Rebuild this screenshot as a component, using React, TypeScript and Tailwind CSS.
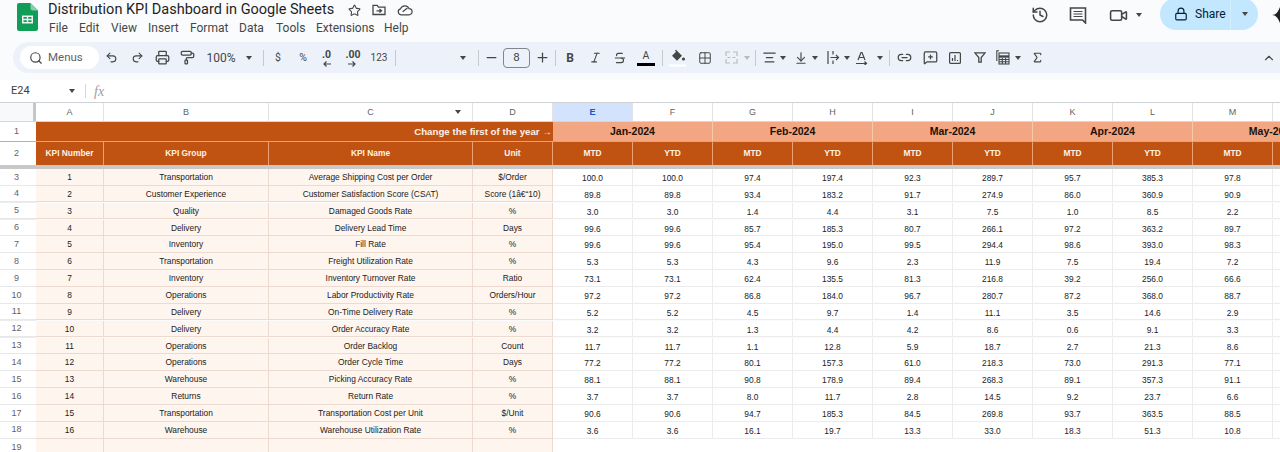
import type { ReactNode } from 'react'
import {
  AlignCenter, ArrowDownToLine, ChevronUp, Grid2x2, History, Italic, Link2, Lock,
  MessageSquarePlus, Minus, PaintRoller, Plus, Printer, Redo2, Search, Sigma, Star, Strikethrough,
  Undo2, Video,
} from 'lucide-react'

// ── Data ──────────────────────────────────────────────────────────────────────

const COLUMNS = ['A', 'B', 'C', 'D', 'E', 'F', 'G', 'H', 'I', 'J', 'K', 'L', 'M', 'N']
const MONTHS = ['Jan-2024', 'Feb-2024', 'Mar-2024', 'Apr-2024', 'May-2024']
const MENUS = [
  { label: 'File', cls: 'w-[30px]' },
  { label: 'Edit', cls: 'w-[32px]' },
  { label: 'View', cls: 'w-[37px]' },
  { label: 'Insert', cls: 'w-[42px]' },
  { label: 'Format', cls: 'w-[49px]' },
  { label: 'Data', cls: 'w-[37px]' },
  { label: 'Tools', cls: 'w-[40px]' },
  { label: 'Extensions', cls: 'w-[68px]' },
  { label: 'Help', cls: 'w-[40px]' },
]

const ROWS: [string, string, string, string[]][] = [
  ['Transportation', 'Average Shipping Cost per Order', '$/Order', ['100.0', '100.0', '97.4', '197.4', '92.3', '289.7', '95.7', '385.3', '97.8']],
  ['Customer Experience', 'Customer Satisfaction Score (CSAT)', 'Score (1â€“10)', ['89.8', '89.8', '93.4', '183.2', '91.7', '274.9', '86.0', '360.9', '90.9']],
  ['Quality', 'Damaged Goods Rate', '%', ['3.0', '3.0', '1.4', '4.4', '3.1', '7.5', '1.0', '8.5', '2.2']],
  ['Delivery', 'Delivery Lead Time', 'Days', ['99.6', '99.6', '85.7', '185.3', '80.7', '266.1', '97.2', '363.2', '89.7']],
  ['Inventory', 'Fill Rate', '%', ['99.6', '99.6', '95.4', '195.0', '99.5', '294.4', '98.6', '393.0', '98.3']],
  ['Transportation', 'Freight Utilization Rate', '%', ['5.3', '5.3', '4.3', '9.6', '2.3', '11.9', '7.5', '19.4', '7.2']],
  ['Inventory', 'Inventory Turnover Rate', 'Ratio', ['73.1', '73.1', '62.4', '135.5', '81.3', '216.8', '39.2', '256.0', '66.6']],
  ['Operations', 'Labor Productivity Rate', 'Orders/Hour', ['97.2', '97.2', '86.8', '184.0', '96.7', '280.7', '87.2', '368.0', '88.7']],
  ['Delivery', 'On-Time Delivery Rate', '%', ['5.2', '5.2', '4.5', '9.7', '1.4', '11.1', '3.5', '14.6', '2.9']],
  ['Delivery', 'Order Accuracy Rate', '%', ['3.2', '3.2', '1.3', '4.4', '4.2', '8.6', '0.6', '9.1', '3.3']],
  ['Operations', 'Order Backlog', 'Count', ['11.7', '11.7', '1.1', '12.8', '5.9', '18.7', '2.7', '21.3', '8.6']],
  ['Operations', 'Order Cycle Time', 'Days', ['77.2', '77.2', '80.1', '157.3', '61.0', '218.3', '73.0', '291.3', '77.1']],
  ['Warehouse', 'Picking Accuracy Rate', '%', ['88.1', '88.1', '90.8', '178.9', '89.4', '268.3', '89.1', '357.3', '91.1']],
  ['Returns', 'Return Rate', '%', ['3.7', '3.7', '8.0', '11.7', '2.8', '14.5', '9.2', '23.7', '6.6']],
  ['Transportation', 'Transportation Cost per Unit', '$/Unit', ['90.6', '90.6', '94.7', '185.3', '84.5', '269.8', '93.7', '363.5', '88.5']],
  ['Warehouse', 'Warehouse Utilization Rate', '%', ['3.6', '3.6', '16.1', '19.7', '13.3', '33.0', '18.3', '51.3', '10.8']],
]

const GRID = 'grid w-[1353px] grid-cols-[36px_68px_165px_204px_80px_80px_80px_80px_80px_80px_80px_80px_80px_80px_80px]'
const ICON = 'h-[15px] w-[15px] text-[#444746]'

// ── Small pieces ──────────────────────────────────────────────────────────────

function Slot({ className, children }: { className: string; children?: ReactNode }) {
  return <div className={`flex h-full shrink-0 items-center justify-center ${className}`}>{children}</div>
}

function Caret({ className = 'w-[10px]', muted = false }: { className?: string; muted?: boolean }) {
  return (
    <Slot className={className}>
      <span className={`h-0 w-0 border-x-[3.5px] border-t-[4px] border-x-transparent ${muted ? 'border-t-[#b8bbbd]' : 'border-t-[#444746]'}`} />
    </Slot>
  )
}

function Sep({ className }: { className: string }) {
  return (
    <Slot className={className}>
      <span className="h-[16px] w-px shrink-0 bg-[#c7c9cc]" />
    </Slot>
  )
}

function SheetsLogo() {
  return (
    <svg width="21" height="28" viewBox="0 0 21 28">
      <path d="M13.5 0H2.2A2.2 2.2 0 0 0 0 2.2v23.6A2.2 2.2 0 0 0 2.2 28h16.6a2.2 2.2 0 0 0 2.2-2.2V7.5z" fill="#0f9d58" />
      <path d="M13.5 0v5.6c0 1 .9 1.9 1.9 1.9H21z" fill="#87ceac" />
      <path d="M5 12.5h11v8H5zm1.5 1.4v1.9h3.3v-1.9zm4.7 0v1.9h3.3v-1.9zm-4.7 3.3v1.9h3.3v-1.9zm4.7 0v1.9h3.3v-1.9z" fill="#f1f1f1" fillRule="evenodd" />
    </svg>
  )
}

// ── Top bar ───────────────────────────────────────────────────────────────────

function TitleBar() {
  return (
    <div className="flex h-[42px] items-start overflow-hidden">
      <div className="ml-[17px] mt-[3px] shrink-0">
        <SheetsLogo />
      </div>
      <div className="ml-[10px] flex flex-col">
        <div className="flex h-[20px] items-center">
          <span className="w-[295px] whitespace-nowrap text-[14.5px] leading-[20px] text-[#1f1f1f]">Distribution KPI Dashboard in Google Sheets</span>
          <Star className="ml-[5px] h-[13px] w-[13px] text-[#444746]" />
          <svg className="ml-[11px]" width="14" height="12" viewBox="0 0 14 12" fill="none" stroke="#444746" strokeWidth="1.3">
            <path d="M1 2.2V10.5h12V3.2H6.4L5.2 1.4H1z" />
            <path d="M4.5 6.8h5M7.5 5l2 1.8-2 1.8" />
          </svg>
          <svg className="ml-[11px]" width="16" height="12" viewBox="0 0 16 12" fill="none" stroke="#444746" strokeWidth="1.2">
            <path d="M4 10.8a3 3 0 0 1-.5-5.9A4.6 4.6 0 0 1 12 4.6a3.1 3.1 0 0 1 0 6.2z" />
            <path d="M5.6 7.8 10.5 4" />
          </svg>
        </div>
        <div className="ml-[1px] flex text-[12px] leading-[16px] text-[#444746]">
          {MENUS.map(m => (
            <span key={m.label} className={m.cls}>{m.label}</span>
          ))}
        </div>
      </div>

      <div className="ml-auto flex h-[30px] items-center">
        <History className="h-[18px] w-[18px] text-[#444746]" />
        <svg className="ml-[20px]" width="18" height="18" viewBox="0 0 18 18" fill="none" stroke="#444746" strokeWidth="1.6">
          <path d="M1.5 2h15v15l-3-3h-12z" />
          <path d="M4.5 5.5h9M4.5 8h9M4.5 10.5h9" strokeWidth="1.2" />
        </svg>
        <Video className="ml-[22px] h-[19px] w-[19px] text-[#444746]" />
        <Caret className="ml-[6px] w-[10px]" />
        <div className="ml-[16px] flex h-[32px] w-[98px] -translate-y-px rounded-full bg-[#c2e7ff] text-[#001d35]">
          <div className="flex w-[71px] items-center border-r border-[#d3edff] pl-[14px]">
            <Lock className="h-[14px] w-[14px]" />
            <span className="ml-[7px] text-[12px]">Share</span>
          </div>
          <Caret className="w-[27px]" />
        </div>
        <svg className="ml-[14px]" width="8" height="16" viewBox="0 0 8 16">
          <path d="M0 8c4 0 6-3 8-8v16c-2-5-4-8-8-8z" fill="#1f1f1f" />
        </svg>
      </div>
    </div>
  )
}

function DecimalArrow({ dir }: { dir: 'left' | 'right' }) {
  return (
    <svg className={`absolute top-[19px] ${dir === 'left' ? 'left-[3px]' : 'left-[15px]'}`} width="8" height="6" viewBox="0 0 8 6" fill="none" stroke="#444746" strokeWidth="1.2">
      <path d={dir === 'left' ? 'M8 3H1M3.5.5 1 3l2.5 2.5' : 'M0 3h7M4.5.5 7 3 4.5 5.5'} />
    </svg>
  )
}

function Toolbar() {
  return (
    <div className="ml-[13px] flex h-[31px] items-center rounded-l-full bg-[#edf2fa] text-[#444746]">
      <div className="ml-[7px] flex h-[23px] w-[79px] shrink-0 items-center rounded-full bg-white pl-[9px]">
        <Search className="h-[14px] w-[14px] text-[#444746]" />
        <span className="ml-[5px] text-[11.5px] text-[#5f6368]">Menus</span>
      </div>
      <Slot className="w-[25px]"><Undo2 className="h-[13px] w-[13px]" /></Slot>
      <Slot className="w-[26px]"><Redo2 className="h-[13px] w-[13px]" /></Slot>
      <Slot className="w-[25px]"><Printer className={ICON} /></Slot>
      <Slot className="w-[25px]"><PaintRoller className={ICON} /></Slot>
      <Slot className="w-[42px] text-[12px]">100%</Slot>
      <Caret className="w-[14px]" />
      <Sep className="w-[14px]" />
      <Slot className="w-[16px] text-[10.5px]">$</Slot>
      <Slot className="w-[34px] text-[10.5px]">%</Slot>
      <Slot className="relative w-[13px] text-[10.5px] font-bold">
        <span className="-mt-[5px]">.0</span>
        <DecimalArrow dir="left" />
      </Slot>
      <Slot className="relative w-[40px] text-[10.5px] font-bold">
        <span className="-mt-[5px]">.00</span>
        <DecimalArrow dir="right" />
      </Slot>
      <Slot className="w-[12px] text-[10px]">123</Slot>
      <Sep className="w-[20px]" />
      <Slot className="w-[51px]" />
      <Caret className="w-[14px]" />
      <Sep className="w-[16px]" />
      <Slot className="w-[10px]"><Minus className={`${ICON} shrink-0`} /></Slot>
      <div className="ml-[7px] flex h-[20px] w-[27px] shrink-0 items-center justify-center rounded-[4px] border border-[#80868b] text-[11.5px]">8</div>
      <Slot className="w-[24px]"><Plus className={ICON} /></Slot>
      <Sep className="w-[2px]" />
      <Slot className="w-[28px] text-[12px] font-bold">B</Slot>
      <Slot className="w-[22px]"><Italic className="h-[13px] w-[13px]" /></Slot>
      <Slot className="w-[28px]"><Strikethrough className="h-[14px] w-[14px]" /></Slot>
      <Slot className="w-[24px]">
        <div className="flex w-[18px] flex-col items-center">
          <span className="text-[10.5px] leading-[12px]">A</span>
          <span className="mt-px h-[3px] w-[18px] bg-black" />
        </div>
      </Slot>
      <Sep className="w-[8px]" />
      <Slot className="w-[22px]">
        <svg width="17" height="18" viewBox="0 0 17 18">
          <path d="M6 1.5 7 .8l6 6-5 5-5-5 4-4z" fill="#444746" />
          <circle cx="14.5" cy="10" r="1.6" fill="#444746" />
          <rect x="0" y="15.5" width="17" height="2" fill="#ffffff" />
        </svg>
      </Slot>
      <Slot className="w-[34px]"><Grid2x2 className="h-[14px] w-[14px]" strokeWidth={1.7} /></Slot>
      <Slot className="w-[18px]">
        <svg width="13" height="13" viewBox="0 0 13 13" fill="none" stroke="#b8bbbd" strokeWidth="1.2">
          <path d="M1 5V1h4M8 1h4v4M1 8v4h4M8 12h4V8M2.5 6.5h3M7.5 6.5h3" />
        </svg>
      </Slot>
      <Caret className="w-[14px]" muted />
      <Sep className="w-[2px]" />
      <Slot className="ml-[4px] w-[18px]"><AlignCenter className="h-[15px] w-[15px]" /></Slot>
      <Caret />
      <Slot className="ml-[4px] w-[18px]"><ArrowDownToLine className="h-[14px] w-[14px]" /></Slot>
      <Caret />
      <Slot className="ml-[4px] w-[18px]">
        <svg width="13" height="13" viewBox="0 0 13 13" fill="none" stroke="#444746" strokeWidth="1.2">
          <path d="M1 0v13M6 0v3.5M6 9.5V13M3.5 6.5h8M9 4l2.5 2.5L9 9" />
        </svg>
      </Slot>
      <Caret />
      <Slot className="ml-[1px] w-[18px]">
        <svg width="14" height="14" viewBox="0 0 14 14" fill="none" stroke="#444746" strokeWidth="1.2">
          <path d="M3 9l3-7.5h1L10 9M4 6.5h5M1 12.5h10M9.5 10.5l2 2-2 1.5" />
        </svg>
      </Slot>
      <Caret className="ml-[4px] w-[10px]" />
      <Sep className="ml-[4px] w-[1px]" />
      <Slot className="ml-[2px] w-[24px]"><Link2 className={ICON} /></Slot>
      <Slot className="ml-[2px] w-[24px]"><MessageSquarePlus className={ICON} /></Slot>
      <Slot className="ml-[1px] w-[24px]">
        <svg width="12" height="12" viewBox="0 0 12 12" fill="none" stroke="#444746" strokeWidth="1.2">
          <rect x=".6" y=".6" width="10.8" height="10.8" rx="1" />
          <path d="M3.5 9V6M6 9V3M8.5 9V8" />
        </svg>
      </Slot>
      <Slot className="ml-[1px] w-[24px]">
        <svg width="12" height="11" viewBox="0 0 12 11" fill="none" stroke="#444746" strokeWidth="1.3">
          <path d="M.8.8h10.4L7.2 5.5V10.2H4.8V5.5z" />
        </svg>
      </Slot>
      <Slot className="ml-[2px] w-[18px]">
        <svg width="14" height="15" viewBox="0 0 14 15" fill="none" stroke="#444746" strokeWidth="1.1">
          <path d="M3 .8H.8V11" />
          <rect x="3" y="3" width="10" height="11" />
          <path d="M3 6.5h10" strokeWidth="2.4" />
          <path d="M3 9.5h10M3 11.8h10M6.3 8v6M9.6 8v6" />
        </svg>
      </Slot>
      <Caret className="ml-[1px] w-[10px]" />
      <Slot className="ml-[2px] w-[24px]"><Sigma className="h-[13px] w-[13px]" /></Slot>
      <Slot className="ml-auto mr-[3px] w-[16px]"><ChevronUp className="h-[14px] w-[14px]" /></Slot>
    </div>
  )
}

function FormulaBar() {
  return (
    <div className="flex h-[23px] items-center border-b border-[#d0d3d6] bg-white text-[#3c4043]">
      <span className="ml-[11px] w-[56px] text-[11px]">E24</span>
      <Caret className="w-[10px]" />
      <span className="ml-[8px] h-[14px] w-px bg-[#d4d6d9]" />
      <span className="ml-[8px] font-['Liberation_Serif',serif] text-[14px] italic text-[#9aa0a6]">fx</span>
    </div>
  )
}

// ── Sheet ─────────────────────────────────────────────────────────────────────

function HeaderCell({ children }: { children: ReactNode }) {
  return (
    <div className="flex items-center justify-center border-r border-[#ec9f73] bg-[#c05312] text-[8.4px] font-bold text-[#fff1e4]">
      {children}
    </div>
  )
}

function Sheet() {
  return (
    <div className="font-['Liberation_Sans',sans-serif]">
      {/* Column letters */}
      <div className={`${GRID} h-[19px] border-b border-[#d4d7da] bg-white text-[9px] text-[#5f6368]`}>
        <div className="border-r-[3px] border-[#c4c7c9] bg-[#f8f9fa]" />
        {COLUMNS.map(c => (
          <div key={c} className={`relative flex items-center justify-center border-r border-[#e1e3e5] pt-[1px] ${c === 'E' ? 'bg-[#d3e3fd] font-bold text-[#0b57d0]' : ''}`}>
            {c}
            {c === 'C' && <span className="absolute right-[11px] top-[7px] h-0 w-0 border-x-[3.5px] border-t-[4px] border-x-transparent border-t-[#444746]" />}
          </div>
        ))}
      </div>

      {/* Row 1 */}
      <div className={`${GRID} h-[20px] border-b border-[#ec9f73]`}>
        <div className="flex items-center justify-center bg-white pr-[3px] pt-[1px] text-[9px] text-[#5f6368]">1</div>
        <div className="col-span-4 flex items-center justify-end bg-[#c05312] pr-[1px] pt-[1px] text-[9.7px] font-bold text-[#fff1e4]">Change the first of the year →</div>
        {MONTHS.map(m => (
          <div key={m} className="col-span-2 flex items-center justify-center border-r border-[#f8c8ab] bg-[#f2a681] pt-[1px] text-[10.5px] font-bold text-[#1d1208]">{m}</div>
        ))}
      </div>

      {/* Row 2 */}
      <div className={`${GRID} h-[23px]`}>
        <div className="flex items-center justify-center bg-white pr-[3px] text-[9px] text-[#5f6368]">2</div>
        <HeaderCell>KPI Number</HeaderCell>
        <HeaderCell>KPI Group</HeaderCell>
        <HeaderCell>KPI Name</HeaderCell>
        <HeaderCell>Unit</HeaderCell>
        {MONTHS.map(m => (
          <div key={m} className="col-span-2 grid grid-cols-2">
            <HeaderCell>MTD</HeaderCell>
            <HeaderCell>YTD</HeaderCell>
          </div>
        ))}
      </div>

      {/* Frozen rows divider */}
      <div className="h-[4px] w-[1280px] bg-[#c8c8c8]" />

      {/* Body */}
      {ROWS.map(([group, name, unit, values], i) => (
        <div key={i} className={`${GRID} h-[16.87px] text-[8.4px] text-[#222222]`}>
          <div className="flex items-center justify-center border-b border-[#e6e8ea] bg-white pr-[3px] pt-[1px] text-[9px] text-[#5f6368]">{i + 3}</div>
          <div className="flex items-center justify-center border-b border-r border-[#ecd9cf] bg-[#fef5ee] pt-[1px]">{i + 1}</div>
          <div className="flex items-center justify-center border-b border-r border-[#ecd9cf] bg-[#fef5ee] pt-[1px]">{group}</div>
          <div className="flex items-center justify-center border-b border-r border-[#ecd9cf] bg-[#fef5ee] pt-[1px]">{name}</div>
          <div className="flex items-center justify-center border-b border-r border-[#ecd9cf] bg-[#fef5ee] pt-[1px]">{unit}</div>
          {values.map((v, j) => (
            <div key={j} className="flex items-center justify-center border-b border-r border-[#ececec] bg-white pt-[3px]">{v}</div>
          ))}
          <div className="border-b border-r border-[#ececec] bg-white" />
          <div className="border-b border-r border-[#ececec] bg-white" />
        </div>
      ))}

      {/* Row 19 */}
      <div className={`${GRID} h-[17px]`}>
        <div className="flex items-center justify-center bg-white pr-[3px] text-[9px] text-[#5f6368]">19</div>
        <div className="border-r border-[#ecd9cf] bg-[#fef5ee]" />
        <div className="border-r border-[#ecd9cf] bg-[#fef5ee]" />
        <div className="border-r border-[#ecd9cf] bg-[#fef5ee]" />
        <div className="border-r border-[#ecd9cf] bg-[#fef5ee]" />
        <div className="col-span-10 bg-white" />
      </div>
    </div>
  )
}

// ── Page ──────────────────────────────────────────────────────────────────────

export default function App() {
  return (
    <div className="h-[452px] w-[1280px] overflow-hidden bg-[#f9fbfd] font-['Roboto',sans-serif]">
      <TitleBar />
      <Toolbar />
      <div className="h-[7px]" />
      <FormulaBar />
      <Sheet />
    </div>
  )
}
